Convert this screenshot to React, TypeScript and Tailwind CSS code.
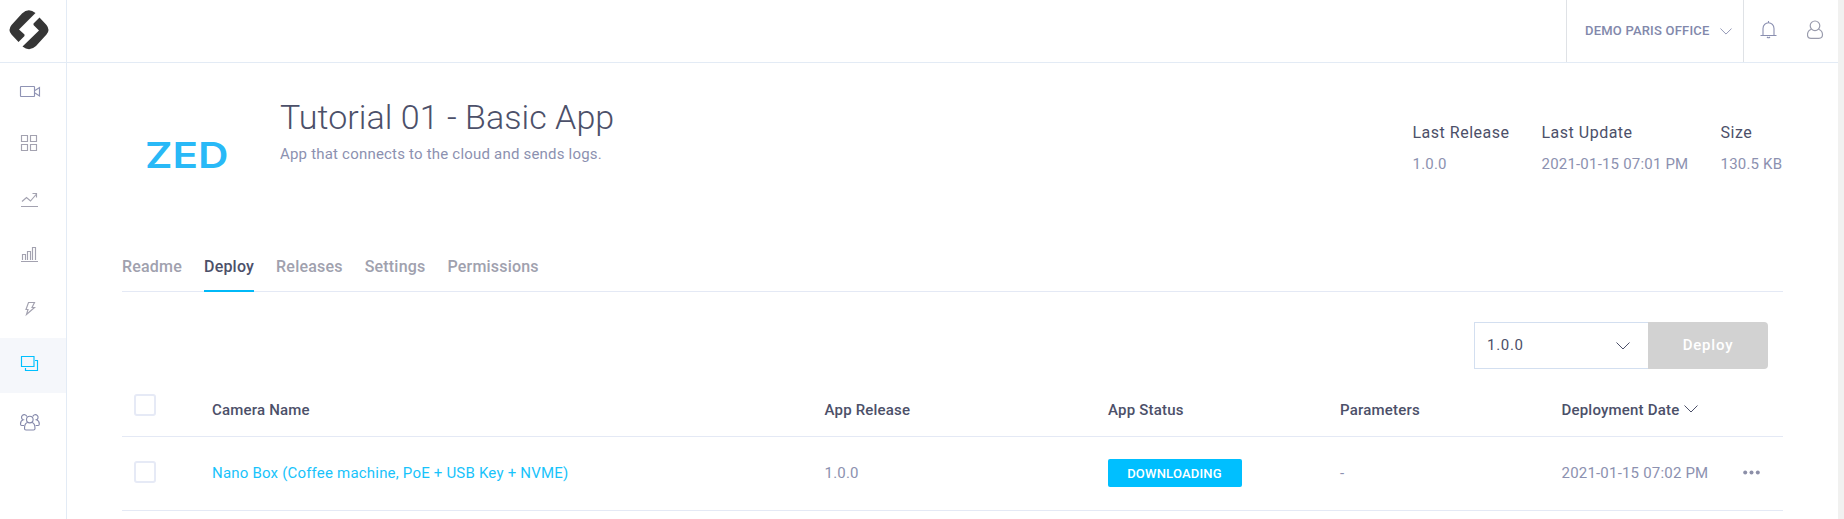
import type { ReactNode } from "react";

const navItems: { name: string; active?: boolean; color: string; icon: ReactNode }[] = [
  {
    name: "cameras",
    color: "text-[#8f93b4]",
    icon: (
      <>
        <rect x="20.5" y="23.5" width="14" height="10" rx="0.5" />
        <path d="M35 27.500l4.500-3v8.500L35 30" />
      </>
    ),
  },
  {
    name: "dashboard",
    color: "text-[#a3a2b0]",
    icon: <path d="M21.500 17.500h6v6h-6zM30.500 17.500h6v6h-6zM21.500 26.500h6v6h-6zM30.500 26.500h6v6h-6z" />,
  },
  {
    name: "trends",
    color: "text-[#a3a2b0]",
    icon: <path d="M21 33.500h17M22 28.500l4.500-4 4 3.500 6-7M32.500 20.500h4v4" />,
  },
  {
    name: "statistics",
    color: "text-[#a3a2b0]",
    icon: <path d="M21 33.500h17M22.500 32v-5.500h3V32M27.500 32v-8.500h3V32M32.500 32V19.500h3V32" />,
  },
  {
    name: "events",
    color: "text-[#a3a2b0]",
    icon: <path d="M28.500 19.500h6l-2.500 5h2.500l-8 7 1.500-5h-2z" />,
  },
  {
    name: "apps",
    active: true,
    color: "text-[#00c0ff]",
    icon: <path d="M21.500 18.500h12.500v10h-12.500zM35 22.500h2.500v10h-12V30" />,
  },
  {
    name: "users",
    color: "text-[#8589ab]",
    icon: (
      <>
        <circle cx="29.800" cy="26.500" r="3.300" />
        <path d="M27.500 29.500c-2 .5-3 2.500-3 6 0 1.200.5 1.500 1.500 1.500h7.500c1 0 1.500-.300 1.500-1.500 0-3.500-1-5.500-3-6" />
        <path d="M26.800 23.500a2.700 2.700 0 1 0-3.600 3.300c-1.700.5-2.700 2-2.700 4.200 0 1.200.3 1.500 1.200 1.500H24M32.800 23.500a2.700 2.700 0 1 1 3.600 3.300c1.700.5 2.900 2 2.900 4.200 0 1.200-.3 1.500-1.200 1.500h-2.500" />
      </>
    ),
  },
];

const stats = [
  { label: "Last Release", value: "1.0.0", width: "w-[129px]" },
  { label: "Last Update", value: "2021-01-15 07:01 PM", width: "w-[179px]" },
  { label: "Size", value: "130.5 KB", width: "w-[62.500px]" },
];

const tabs = ["Readme", "Deploy", "Releases", "Settings", "Permissions"];

function Chevron({ className }: { className: string }) {
  return (
    <svg viewBox="0 0 14 8" className={className} fill="none" stroke="currentColor">
      <path d="M.500.500L7 7 13.500.500" />
    </svg>
  );
}

function Checkbox() {
  return <span className="block size-[22px] rounded-[3px] border-2 border-[#e6eaf6] bg-white" />;
}

function Sidebar() {
  return (
    <aside className="flex w-[67px] shrink-0 flex-col border-r border-[#e3ebf5]">
      <div className="h-[63px] border-b border-[#e3ebf5]">
        <svg width="66" height="62" viewBox="0 0 66 62" fill="#363636">
          <path d="M35.500 13L19 29.500l5.500 5v1.500L18.500 42l-7-7.500Q7.500 30 11.500 25L22 13.500Q28.500 7.500 35.500 13Z" />
          <path d="M22.500 46.500L39 30.500 33.500 25v-1.500l6-6 7 7.500q4 5 0 9.500L36 46q-6.500 6-13.500.5Z" />
        </svg>
      </div>
      <nav>
        {navItems.map((item) => (
          <a key={item.name} className={`block h-[55px] ${item.color} ${item.active ? "bg-[#f5f7fb]" : ""}`}>
            <svg width="66" height="55" viewBox="0 0 66 55" fill="none" stroke="currentColor" strokeWidth="1.150">
              {item.icon}
            </svg>
          </a>
        ))}
      </nav>
    </aside>
  );
}

function TopBar() {
  return (
    <header className="flex h-[63px] shrink-0 justify-end border-b border-[#e3ebf5] text-[#8a8fb0]">
      <div className="flex w-[178px] items-center border-x border-[#dfe2e6] pl-[18px] text-[#8288ab]">
        <span className="w-[136px] pb-px text-[13px] leading-5 font-medium tracking-[0.2px] whitespace-nowrap">DEMO PARIS OFFICE</span>
        <Chevron className="-ml-px h-[7px] w-[12px]" />
      </div>
      <div className="flex w-[94px] items-start pt-[20px] pl-[16px]">
        <svg width="18" height="20" viewBox="0 0 18 20" fill="none" stroke="currentColor" strokeWidth="1.100">
          <path d="M.500 15.500h16M3 15.500V8.500a5.500 5.700 0 0 1 11 0v7M8.500 3V1M7 17q1.500 1.500 3 0" />
        </svg>
        <svg width="18" height="20" viewBox="0 0 18 20" className="ml-[29px] text-[#9a9cad]" fill="none" stroke="currentColor" strokeWidth="1.200">
          <circle cx="8" cy="5.800" r="4.800" />
          <path d="M4.500 9.300C1.500 10.300.500 12.300.500 14.800q0 3.500 3.500 3.500h8q3.500 0 3.500-3.500c0-2.500-1-4.500-4-5.500" />
        </svg>
      </div>
    </header>
  );
}

function AppHeader() {
  return (
    <section className="flex h-[173px]">
      <div className="w-[158px] pt-[62px] pl-[18px]">
        <svg width="92" height="60" viewBox="0 0 92 60" className="overflow-visible font-['Inter'] font-semibold" fill="#29b9f7">
          <text x="5" y="43" fontSize="35.500" textLength="83.500" lengthAdjust="spacingAndGlyphs">ZED</text>
        </svg>
      </div>
      <div className="flex-1 pt-[34px]">
        <h1 className="text-[34px] leading-[40px] font-light tracking-[0.050px] text-[#4c5069]">Tutorial 01 - Basic App</h1>
        <p className="mt-[7px] text-[15px] leading-5 tracking-[0.2px] text-[#8c91b0]">App that connects to the cloud and sends logs.</p>
      </div>
      <dl className="flex pt-[60px]">
        {stats.map((s) => (
          <div key={s.label} className={`${s.width} whitespace-nowrap`}>
            <dt className="text-[16px] leading-5 tracking-[0.5px] text-[#4c5069]">{s.label}</dt>
            <dd className="mt-[11px] text-[15px] leading-5 tracking-[0.2px] text-[#8c91b0]">{s.value}</dd>
          </div>
        ))}
      </dl>
    </section>
  );
}

function Tabs() {
  return (
    <div className="flex h-[56px] items-end gap-[22px] border-b border-[#e4e9f5]">
      {tabs.map((tab) => (
        <a
          key={tab}
          className={`-mb-px h-[35px] border-b-2 text-[16px] leading-5 font-medium tracking-[0.2px] ${
            tab === "Deploy" ? "border-[#00b9f8] text-[#4c5069]" : "border-transparent text-[#a0a1ae]"
          }`}
        >
          {tab}
        </a>
      ))}
    </div>
  );
}

const columns = "grid grid-cols-[90px_612.500px_283.500px_232px_221.500px_221.500px]";

function DeployTable() {
  return (
    <div className="text-[15px] leading-5">
      <div className={`${columns} h-[68px] border-b border-[#e4e9f5] font-medium tracking-[0.2px] text-[#4c5069]`}>
        <div className="pt-[25px] pl-3"><Checkbox /></div>
        <div className="pt-[31px]">Camera Name</div>
        <div className="pt-[31px]">App Release</div>
        <div className="pt-[31px]">App Status</div>
        <div className="pt-[31px]">Parameters</div>
        <div className="flex pt-[31px] whitespace-nowrap">
          Deployment Date
          <Chevron className="mt-[5px] ml-[5px] h-[8px] w-[14px]" />
        </div>
      </div>
      <div className={`${columns} h-[74px] items-center border-b border-[#e4e9f5] tracking-[0.2px] text-[#8c91b0]`}>
        <div className="pb-[3px] pl-3"><Checkbox /></div>
        <div className="pb-px text-[#18c3fb]">Nano Box (Coffee machine, PoE + USB Key + NVME)</div>
        <div className="pb-px">1.0.0</div>
        <div className="pb-px">
          <span className="-ml-[0.500px] flex h-[28px] w-[134px] items-center justify-center rounded-[2px] bg-[#00bfff] pt-px text-[13px] font-medium tracking-[0.2px] text-white">
            DOWNLOADING
          </span>
        </div>
        <div className="pb-px">-</div>
        <div className="flex items-center pb-px whitespace-nowrap">
          <span className="w-[181px]">2021-01-15 07:02 PM</span>
          <svg width="17" height="5" viewBox="0 0 17 5" className="mb-px" fill="#8c8fa8">
            <circle cx="2.200" cy="2.500" r="2" />
            <circle cx="8.500" cy="2.500" r="2" />
            <circle cx="14.800" cy="2.500" r="2" />
          </svg>
        </div>
      </div>
    </div>
  );
}

export default function App() {
  return (
    <div className="flex h-[519px] w-[1844px] overflow-hidden bg-white font-['Roboto',sans-serif]">
      <Sidebar />
      <div className="flex w-[1771px] flex-col">
        <TopBar />
        <main className="w-[1716px] pl-[55px]">
          <AppHeader />
          <Tabs />
          <div className="flex justify-end pt-[30px] pr-[15px]">
            <div className="flex h-[47px] w-[174px] items-center justify-between border border-r-0 border-[#d3dff0] pr-[18px] pb-px pl-[12px] text-[15px] leading-5 tracking-[0.7px] text-[#4c5069]">
              1.0.0
              <Chevron className="mt-px h-[8px] w-[14px]" />
            </div>
            <button className="h-[47px] w-[120px] rounded-r-[4px] bg-[#d2d2d2] pb-0.5 text-[15px] leading-5 font-medium tracking-[0.800px] text-white">
              Deploy
            </button>
          </div>
          <DeployTable />
        </main>
      </div>
      <div className="w-[6px] shrink-0 bg-[#f1f1f0]" />
    </div>
  );
}
